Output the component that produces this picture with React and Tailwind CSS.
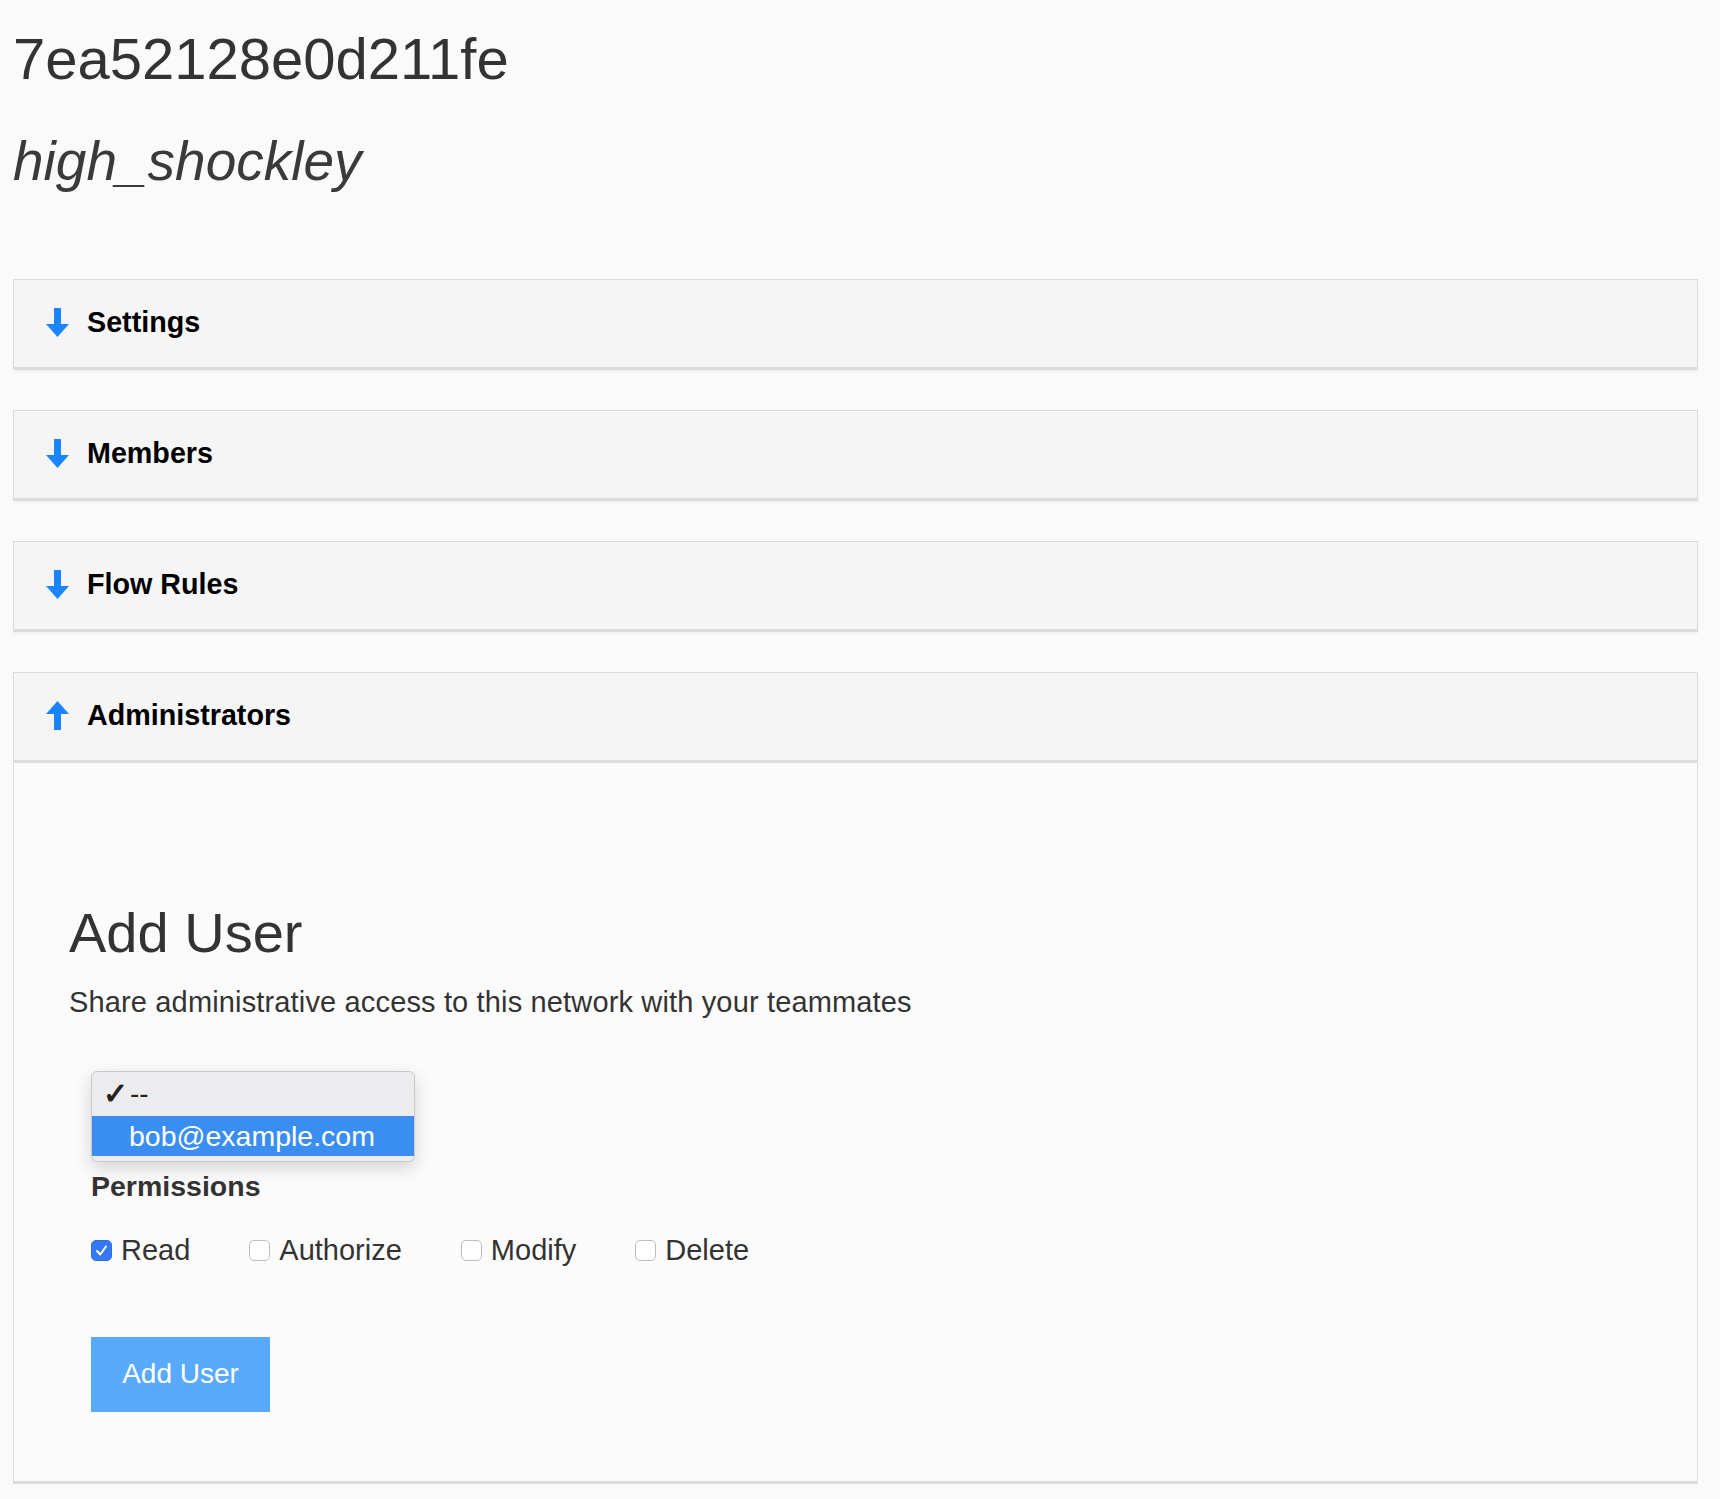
import { useState } from 'react';

const Arrow = ({ up }) => (
  <svg width="23" height="29" viewBox="0 0 23 29" className="shrink-0">
    {up ? (
      <>
        <polygon points="11.5,0 0,13 23,13" fill="#1a85ff" />
        <rect x="8" y="12" width="7" height="17" fill="#1a85ff" />
      </>
    ) : (
      <>
        <rect x="8" y="0" width="7" height="17" fill="#1a85ff" />
        <polygon points="0,16 23,16 11.5,29" fill="#1a85ff" />
      </>
    )}
  </svg>
);

const Panel = ({ title, open, children }) => (
  <div className="mt-[40px] first:mt-0">
    <div className="h-[91px] flex items-center pl-[32px] pb-[3px] gap-[18px] bg-[#f5f5f5] border border-[#dcdcdc] border-b-[3px] shadow-[0_2px_3px_rgba(0,0,0,0.04)]">
      <Arrow up={open} />
      <span className="text-[28.7px] leading-none font-bold text-black">{title}</span>
    </div>
    {open && children}
  </div>
);

const Check = ({ label, checked, onChange }) => (
  <label className="flex items-center gap-[9px] cursor-pointer">
    <span
      onClick={onChange}
      className={
        checked
          ? 'w-[21px] h-[21px] rounded-[5px] bg-[#3478f6] border border-[#2f6fe0] flex items-center justify-center'
          : 'w-[21px] h-[21px] rounded-[5px] bg-white border border-[#bdbdbd]'
      }
    >
      {checked && (
        <svg width="13" height="13" viewBox="0 0 13 13">
          <path d="M2 7 L5.2 10.5 L11 2.5" fill="none" stroke="white" strokeWidth="2" strokeLinecap="round" strokeLinejoin="round" />
        </svg>
      )}
    </span>
    <span className="text-[29px] leading-none text-[#333]">{label}</span>
  </label>
);

export default function App() {
  const [perms, setPerms] = useState({ Read: true, Authorize: false, Modify: false, Delete: false });

  const toggle = (k) => setPerms({ ...perms, [k]: !perms[k] });

  return (
    <div className="min-h-screen bg-[#fafafa] pl-[13px] pr-[22px] pb-[16px] font-['Liberation_Sans',Arial,sans-serif] text-[#333]">
      <h1 className="pt-[30px] text-[58px] leading-none font-normal">7ea52128e0d211fe</h1>
      <h2 className="mt-[46px] text-[55px] leading-none italic font-normal text-[#3a3a3a]">high_shockley</h2>

      <div className="mt-[90px]">
        <Panel title="Settings" />
        <Panel title="Members" />
        <Panel title="Flow Rules" />
        <Panel title="Administrators" open>
          <div className="h-[721px] bg-[#fbfbfb] border border-t-0 border-[#dcdcdc] border-b-[3px] pl-[55px] pt-[142px]">
            <h3 className="text-[56px] leading-none font-normal">Add User</h3>
            <p className="mt-[27px] text-[29px] leading-none tracking-[0.15px]">Share administrative access to this network with your teammates</p>

            <div className="ml-[22px]">
              {/* open select menu */}
              <div className="mt-[54px] w-[324px] h-[91px] rounded-[6px] bg-[#ececef] border border-[#c9c9c9] shadow-[0_6px_18px_rgba(0,0,0,0.16)] overflow-hidden">
                <div className="h-[44px] flex items-center pl-[11px] text-[28px] leading-none text-[#222]">
                  <span className="w-[27px] text-[30px] font-bold">✓</span>
                  <span>--</span>
                </div>
                <div className="h-[40px] bg-[#3a8ef0] flex items-center pl-[37px] text-[28.5px] leading-none text-white">
                  bob@example.com
                </div>
              </div>

              <div className="mt-[10px] text-[28.5px] leading-none font-bold text-[#333]">Permissions</div>

              <div className="mt-[35px] flex items-center gap-[59px]">
                {Object.keys(perms).map((k) => (
                  <Check key={k} label={k} checked={perms[k]} onChange={() => toggle(k)} />
                ))}
              </div>

              <button className="mt-[72px] w-[179px] h-[75px] bg-[#59a9fc] text-white text-[28px] leading-none">
                Add User
              </button>
            </div>
          </div>
        </Panel>
      </div>
    </div>
  );
}
